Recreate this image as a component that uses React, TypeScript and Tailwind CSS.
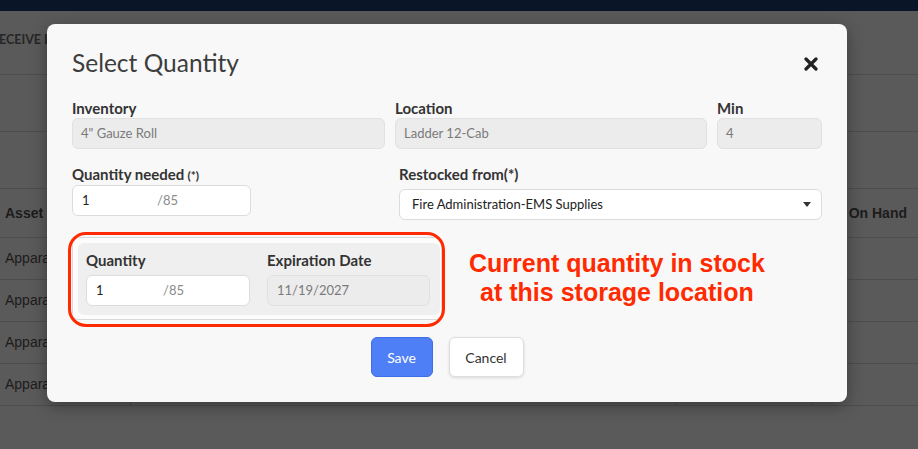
import React from "react";

const lato = { fontFamily: "Lato, 'Noto Sans', sans-serif" };

function Field({ label, value, w }: { label: string; value: string; w: string }) {
  return (
    <div className={w}>
      <div className="text-[15px] leading-[17px] font-bold text-[#333]">{label}</div>
      <div className="mt-[1px] h-[31px] rounded-[6px] border border-[#e1e1e1] bg-[#ececec] px-[8px] flex items-center text-[13px] text-[#7a7a7a]">
        {value}
      </div>
    </div>
  );
}

function QtyInput({ w, gap }: { w: string; gap: string }) {
  return (
    <div className={`${w} h-[31px] rounded-[6px] border border-[#dcdcdc] bg-white pl-[9px] flex items-center text-[13px]`}>
      <span className={`${gap} text-[#222]`}>1</span>
      <span className="text-[#8a8a8a]">/85</span>
    </div>
  );
}

export default function App() {
  const rows = [0, 1, 2, 3];
  return (
    <div className="relative w-[918px] h-[449px] overflow-hidden bg-[#5a5a5a]" style={{ fontFamily: "'Liberation Sans', Arial, sans-serif" }}>
      {/* background page (dimmed) */}
      <div className="h-[11px] bg-[#0b1528]" />
      <div className="h-[64px] border-b border-[#4d4d4d] flex items-center pb-[4px] overflow-hidden">
        <span className="ml-[-9px] text-[12.5px] font-bold text-[#262626] whitespace-nowrap" style={lato}>RECEIVE ITEMS</span>
      </div>
      <div className="h-[57px] border-b border-[#4d4d4d]" />
      <div className="h-[57px] border-b border-[#4d4d4d]" />
      <div className="h-[49px] border-b border-[#4d4d4d] flex items-center justify-between pl-[5px] pr-[11px]">
        <span className="text-[14px] font-bold text-[#1c1c1c]">Asset Type</span>
        <span className="text-[14px] font-bold text-[#1c1c1c]">On Hand</span>
      </div>
      {rows.map((r) => (
        <div key={r} className="h-[42px] border-b border-[#4d4d4d] flex">
          <div className="w-[130px] flex items-center pl-[5px] text-[14px] text-[#1c1c1c]">Apparatus</div>
          <div className="w-[546px] border-l border-[#4d4d4d]" />
          <div className="w-[136px] border-l border-[#4d4d4d]" />
          <div className="flex-1 border-l border-[#4d4d4d]" />
        </div>
      ))}

      {/* modal */}
      <div
        className="absolute left-[47px] top-[24px] w-[800px] h-[378px] rounded-[8px] bg-[#f8f8f8] shadow-[0_4px_16px_rgba(0,0,0,0.35)] px-[25px]"
        style={lato}
      >
        <div className="pt-[23px] flex items-start justify-between">
          <div className="text-[24.5px] leading-[32px] text-[#3d3d3d]">Select Quantity</div>
          <svg className="mt-[10px] mr-[4px]" width="14" height="14" viewBox="0 0 14 14">
            <path d="M2 2 L12 12 M12 2 L2 12" stroke="#222" strokeWidth="3.2" strokeLinecap="round" />
          </svg>
        </div>

        <div className="mt-[21px] flex gap-[10px]">
          <Field label="Inventory" value={'4" Gauze Roll'} w="w-[313px]" />
          <Field label="Location" value="Ladder 12-Cab" w="w-[312px]" />
          <Field label="Min" value="4" w="w-[105px]" />
        </div>

        <div className="mt-[17px] flex gap-[10px]">
          <div className="w-[313px]">
            <div className="text-[15px] leading-[17px] font-bold text-[#333]">
              Quantity needed<span className="ml-[3px] text-[12px]">(*)</span>
            </div>
            <div className="mt-[1px]">
              <QtyInput w="w-[179px]" gap="w-[75px]" />
            </div>
          </div>
          <div className="w-[427px] pl-[4px]">
            <div className="text-[15px] leading-[17px] font-bold text-[#333]">Restocked from(*)</div>
            <div className="mt-[6px] w-[423px] h-[31px] rounded-[6px] border border-[#dcdcdc] bg-white pl-[12px] pr-[10px] flex items-center justify-between text-[13px] text-[#222]">
              <span>Fire Administration-EMS Supplies</span>
              <svg width="8" height="5" viewBox="0 0 8 5">
                <path d="M0 0 L8 0 L4 5 Z" fill="#333" />
              </svg>
            </div>
          </div>
        </div>

        <div className="mt-[17px] flex items-start">
          <div className="relative w-[370px] h-[83px] rounded-[6px] border border-[#d9d9d9] bg-[#fcfcfc] pt-[5px] pl-[5px] pr-[1px]">
            <div className="h-[72px] rounded-[6px] bg-[#efefef] pl-[8px] pr-[10px] pt-[9px] flex gap-[17px]">
              <div className="w-[164px]">
                <div className="text-[15px] leading-[17px] font-bold text-[#333]">Quantity</div>
                <div className="mt-[6px]">
                  <QtyInput w="w-[164px]" gap="w-[67px]" />
                </div>
              </div>
              <div className="w-[164px]">
                <div className="text-[15px] leading-[17px] font-bold text-[#333]">Expiration Date</div>
                <div className="mt-[6px] h-[31px] rounded-[6px] border border-[#e1e1e1] bg-[#ececec] pl-[9px] flex items-center text-[13px] text-[#7a7a7a]">
                  11/19/2027
                </div>
              </div>
            </div>
            <div className="absolute left-[-5px] top-[-6px] w-[377px] h-[95px] rounded-[18px] border-[3px] border-[#ff2a00]" />
          </div>
          <div
            className="ml-[27px] mt-[12px] text-center text-[25px] leading-[29px] font-bold text-[#ff2a00]"
            style={{ fontFamily: "'Liberation Sans', Arial, sans-serif" }}
          >
            Current quantity in stock
            <br />
            at this storage location
          </div>
        </div>

        <div className="mt-[17px] flex justify-center gap-[16px]">
          <button className="w-[62px] h-[40px] rounded-[6px] bg-[#4f7ff7] border border-[#3f6de3] text-white text-[14px]">
            Save
          </button>
          <button className="w-[75px] h-[40px] rounded-[6px] bg-white border border-[#dedede] shadow-[0_1px_3px_rgba(0,0,0,0.12)] text-[#333] text-[14px]">
            Cancel
          </button>
        </div>
      </div>
    </div>
  );
}
